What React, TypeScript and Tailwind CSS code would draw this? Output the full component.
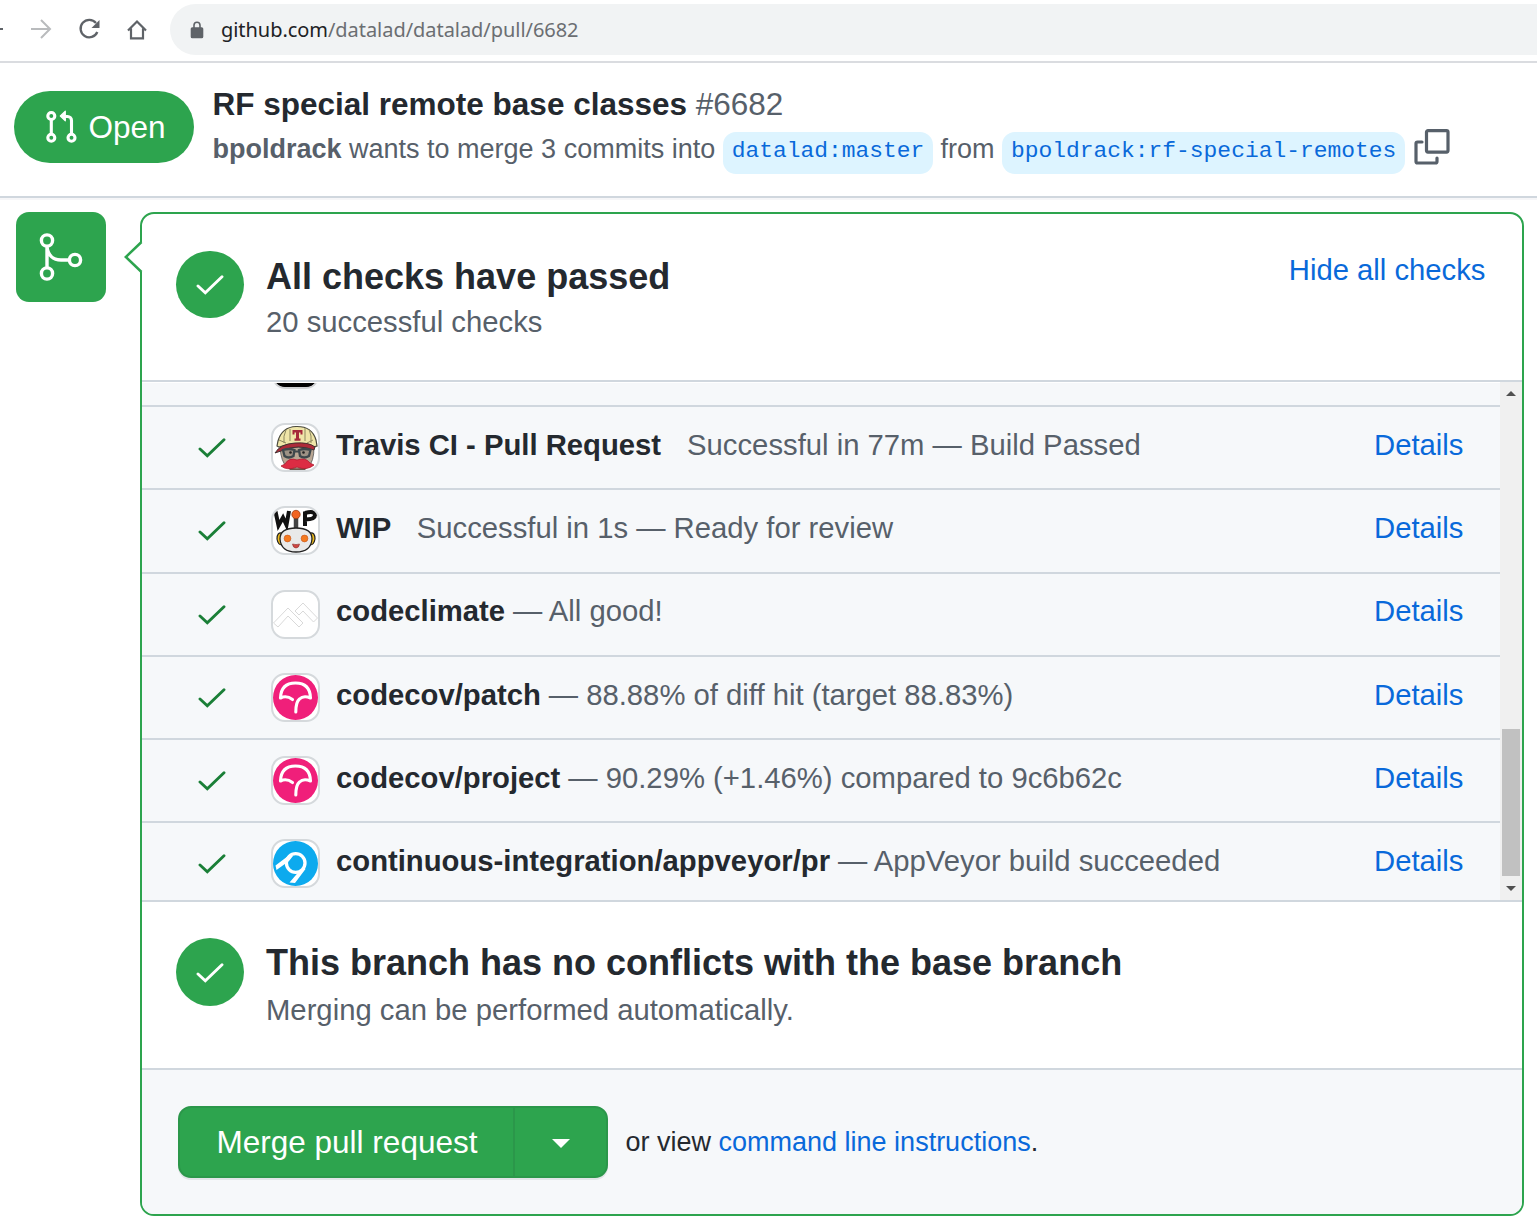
import React from 'react';

type IconProps = { className?: string };

function Check({ className }: IconProps) {
  return (
    <svg viewBox="0 0 28 20" className={className} fill="none" stroke="currentColor" strokeWidth="2.9" strokeLinecap="round" strokeLinejoin="miter">
      <path d="M2 11 L9.3 17.800 L26 1.800" />
    </svg>
  );
}

function PullRequest() {
  return (
    <svg viewBox="0 0 36 36" className="h-9 w-9 shrink-0" fill="none" stroke="white" strokeWidth="3.1">
      <circle cx="8.300" cy="7" r="3.500" />
      <circle cx="8.300" cy="28.700" r="3.500" />
      <circle cx="28.500" cy="28.700" r="3.500" />
      <path d="M8.300 10.500v15M28.500 25.500V11.500a4 4 0 0 0-4-4H21" />
      <path d="M17.300 7l5-4.800v9.600z" fill="white" strokeWidth="1.200" strokeLinejoin="round" />
    </svg>
  );
}

function MergeIcon() {
  return (
    <svg viewBox="0 0 54 54" className="h-[54px] w-[54px]" fill="none" stroke="white" strokeWidth="3.4">
      <circle cx="13" cy="10.500" r="5.600" />
      <circle cx="13" cy="43.500" r="5.600" />
      <circle cx="41" cy="30" r="5.600" />
      <path d="M13 16v21M13 17c1 8 6 13 14 13h8.500" />
    </svg>
  );
}

function CopyIcon() {
  return (
    <svg viewBox="0 0 36 36" className="h-9 w-9" fill="none" stroke="#57606a" strokeWidth="3.200" strokeLinecap="round" strokeLinejoin="round">
      <rect x="12.500" y="1.600" width="21.500" height="21.500" rx="1.500" />
      <path d="M8 13H3.500a1.500 1.500 0 0 0-1.500 1.500v18a1.500 1.500 0 0 0 1.500 1.500h18a1.500 1.500 0 0 0 1.500-1.500V29" />
    </svg>
  );
}

function Travis() {
  return (
    <svg viewBox="0 0 45 45" className="h-full w-full">
      <path d="M7 22h34q0 15-6 20-11 5-21 0-6-5-7-20z" fill="#b9a794" stroke="#555" strokeWidth=".8" />
      <path d="M4 21l1-5Q9 2 23 1.500 39 1 43 15l1 6-4 1Q23 15 6 22z" fill="#efe5a8" stroke="#4b4a3d" strokeWidth="1.200" />
      <path d="M13 5q-3 6-2 13M36 4q3 7 2 14M17 4v12M32 3v13M6 15l7 3M40 15l-6 3" stroke="#8d875e" fill="none" />
      <path d="M19.500 5h10v4.500h-2V7.500h-1.500v6h1.500v2.200h-6v-2.200h1.500v-6h-1.500v2h-2z" fill="#a5283a" />
      <path d="M2 28q5-9 20-10 14-1 20 4l-1 3q-16-6-30 0z" fill="#ad2b39" stroke="#3a2b2d" strokeWidth=".9" />
      <path d="M10 25q6-2 11.500 0l-1 6q-5 3-9 0zM26 25q6-2 11.500 0l-1.500 6q-5 3-9 0z" fill="#9d9285" stroke="#3e484c" strokeWidth="2.300" />
      <path d="M21.500 26.500h5" stroke="#3e484c" strokeWidth="2" />
      <circle cx="17.500" cy="27.500" r="1.300" fill="#222" />
      <circle cx="30.500" cy="27.500" r="1.300" fill="#222" />
      <path d="M13 41q10 5 23 0l-4 4H17z" fill="#6c5548" />
      <path d="M24 35q-8-3-12 4l-4 2q6 5 16 1 10 4 17-2l-4-2q-4-6-13-3z" fill="#dc2c43" stroke="#b01f33" strokeWidth=".8" />
    </svg>
  );
}

function Wip() {
  return (
    <svg viewBox="0 0 45 45" className="h-full w-full">
      <path d="M2.500 3.500l3 14 4.500-8 3.500 7.500 2.500-14M32 18V3.500M32 5q10-2.500 10 2t-10 4.500" fill="none" stroke="#111" strokeWidth="4" />
      <path d="M23 8v14" stroke="#444" strokeWidth="4.500" />
      <circle cx="23" cy="6.500" r="4.200" fill="#f26522" stroke="#8f3711" strokeWidth=".7" />
      <path d="M9 25q-5-1-5 6 1 6 5 6M37 25q5-1 5 6-1 6-5 6" fill="#f0bd1c" stroke="#222" strokeWidth="1.200" />
      <path d="M7 31Q7 20 23 20t16 11Q38 44 23 44T7 31z" fill="#e9e9e9" stroke="#222" strokeWidth="1.300" />
      <circle cx="14.500" cy="30.500" r="3.400" fill="#f47a20" stroke="#c4541c" strokeWidth=".6" />
      <circle cx="31.500" cy="30.500" r="3.400" fill="#f47a20" stroke="#c4541c" strokeWidth=".6" />
      <path d="M19.500 36q3.500 1.200 7 0-.5 4-3.500 4t-3.500-4z" fill="#cf4542" stroke="#8d2d2a" strokeWidth=".6" />
    </svg>
  );
}

function CodeClimate() {
  return (
    <svg viewBox="0 0 45 45" className="h-full w-full" fill="none" stroke="#d9d9d9" strokeWidth="1">
      <path d="M.5 31L15 16l15 15-4 4-11-11L5 35zM22 19l8-8 14.500 15-4 4-10.500-11-4 4z" />
    </svg>
  );
}

function Codecov() {
  return (
    <svg viewBox="0 0 45 45" className="h-full w-full">
      <circle cx="22.500" cy="22.500" r="22.500" fill="#f01f7a" />
      <path d="M7.500 23Q8 8 22.500 8T37.500 23q-7-3-11 1-3.700 3-3.700 13M7.500 23q6-3 12 1.500" fill="none" stroke="white" strokeWidth="3.100" strokeLinecap="round" strokeLinejoin="round" />
    </svg>
  );
}

function AppVeyor() {
  return (
    <svg viewBox="0 0 45 45" className="h-full w-full">
      <circle cx="22.500" cy="22.500" r="22.500" fill="#0daaee" />
      <circle cx="22.700" cy="22" r="9.300" fill="none" stroke="white" strokeWidth="3.300" />
      <path d="M2.500 24.500L17 13.500l3 1.500-4 5L3.500 29zM16.500 41.500L25.500 31l6-4 1 1L22 42z" fill="white" />
    </svg>
  );
}

const checks = [
  { icon: <Travis />, name: 'Travis CI - Pull Request', note: 'Successful in 77m — Build Passed', gap: 'ml-[26px]' },
  { icon: <Wip />, name: 'WIP', note: 'Successful in 1s — Ready for review', gap: 'ml-[25.5px]' },
  { icon: <CodeClimate />, name: 'codeclimate', note: '— All good!', gap: 'ml-2' },
  { icon: <Codecov />, name: 'codecov/patch', note: '— 88.88% of diff hit (target 88.83%)', gap: 'ml-2' },
  { icon: <Codecov />, name: 'codecov/project', note: '— 90.29% (+1.46%) compared to 9c6b62c', gap: 'ml-2' },
  { icon: <AppVeyor />, name: 'continuous-integration/appveyor/pr', note: '— AppVeyor build succeeded', gap: 'ml-2' },
];

function Status({ title, note, badge, lead }: { title: string; note: string; badge: string; lead: string }) {
  return (
    <div className="flex">
      <div className={`mt-0.5 flex w-[68px] shrink-0 items-center justify-center rounded-full bg-[#2da44e] pt-px text-white ${badge}`}>
        <Check className="h-5 w-7" />
      </div>
      <div className="ml-[22px]">
        <h2 className={`text-[36px] font-bold text-[#24292f] ${lead}`}>{title}</h2>
        <p className="text-[29.25px] leading-[40px] text-[#57606a]">{note}</p>
      </div>
    </div>
  );
}

export default function App() {
  return (
    <div className="h-[1227px] w-[1537px] overflow-hidden bg-white font-['Liberation_Sans',Arial,sans-serif] whitespace-nowrap">
      <header className="flex h-[63px] items-start border-b-2 border-[#dadce0] pt-1">
        <div className="flex h-[51px] w-[170px] shrink-0 items-center">
          <svg viewBox="0 0 170 51" className="h-[51px] w-[170px]" fill="none" stroke="#5f6368" strokeWidth="2">
            <path d="M0 25h3" />
            <path d="M31 25h19M41 16l9 9-9 9" stroke="#b9bbbd" />
            <path d="M96 19a8.700 8.700 0 1 0 1.300 9" strokeWidth="2.300" />
            <path d="M99.500 16v8h-8z" fill="#5f6368" stroke="none" />
            <path d="M128 26.500l9-9 9 9M131 24.500V34.300h12V24.500" strokeWidth="2.200" />
          </svg>
        </div>
        <div className="flex h-[51px] flex-1 items-center rounded-l-full bg-[#f1f3f4] pl-[20px]">
          <svg viewBox="0 0 14 18" className="h-[18px] w-[14px]" fill="none" stroke="#5f6368" strokeWidth="1.600">
            <rect x="1.500" y="7" width="11" height="9.500" rx=".8" fill="#5f6368" />
            <path d="M4 7V4.300a3 3 0 0 1 6 0V7" />
          </svg>
          <span className="ml-[17px] font-['Noto_Sans',sans-serif] text-[20px] tracking-[-0.05px] text-[#6b6e72]"><span className="text-[#202124]">github.com</span>/datalad/datalad/pull/6682</span>
        </div>
      </header>

      <section className="flex h-[135px] items-start border-b-2 border-[#d0d7de] shadow-[0_2px_0_#f6f6f8]">
        <div className="mt-7 ml-3.5 flex h-[72px] w-[180px] items-center rounded-full bg-[#2da44e] pl-[29px] text-white">
          <PullRequest />
          <span className="ml-[9.5px] pt-0.5 text-[31.5px]">Open</span>
        </div>
        <div className="mt-[21px] ml-[18.5px]">
          <h1 className="text-[31.5px] leading-[40px] text-[#57606a]"><b className="text-[#24292f]">RF special remote base classes</b> #6682</h1>
          <div className="mt-0.5 flex h-[46px] items-center text-[27px] leading-[46px] text-[#57606a]">
            <span><b>bpoldrack</b> wants to merge 3 commits into</span>
            <code className="mt-2 ml-2 h-[42px] rounded-[13px] bg-[#ddf4ff] px-[8.5px] font-['Liberation_Mono',monospace] text-[22.95px] leading-[38px] text-[#0969da]">datalad:master</code>
            <span className="ml-[7.5px]">from</span>
            <code className="mt-2 ml-2 h-[42px] rounded-[13px] bg-[#ddf4ff] px-[8.5px] font-['Liberation_Mono',monospace] text-[22.95px] leading-[38px] text-[#0969da]">bpoldrack:rf-special-remotes</code>
            <span className="mb-[5px] ml-[9px]"><CopyIcon /></span>
          </div>
        </div>
      </section>

      <main className="flex pt-[14px] pl-4">
        <div className="flex h-[90px] w-[90px] shrink-0 items-center justify-center rounded-[13px] bg-[#2da44e]"><MergeIcon /></div>
        <div className="relative ml-[34px] h-[1004px] w-[1384px] rounded-[14px] border-2 border-[#2da44e]">
          <svg viewBox="0 0 19 32" className="absolute top-[27px] -left-[18px] h-8 w-[19px]">
            <path d="M18 1.500L2 16l16 14.500" fill="white" />
            <path d="M18 1.500v29" stroke="white" strokeWidth="3" />
            <path d="M17.500 1L1.800 16l15.700 15" fill="none" stroke="#2da44e" strokeWidth="2.500" />
          </svg>
          <div className="flex h-[168px] justify-between border-b-2 border-[#d0d7de] pt-[35px] pr-[36.5px] pl-[34px]">
            <Status title="All checks have passed" note="20 successful checks" badge="h-[67px]" lead="leading-[53px] pt-px -mb-px" />
            <a className="text-[29.25px] leading-[42px] text-[#0969da]">Hide all checks</a>
          </div>
          <div className="flex h-[520px] overflow-hidden border-b-2 border-[#d0d7de]">
            <div className="h-full flex-1 border-t border-white bg-[#f6f8fa]">
              <div className="h-[22px] pl-[130px]">
                <svg viewBox="0 0 48 7" className="h-[7px] w-12">
                  <path d="M3 0q4 5 10 5h21q6 0 10-5" fill="black" stroke="#d0d2d4" strokeWidth="2" />
                  <path d="M5 0q3 3.500 9 3.500h20q6 0 8-3.500" fill="black" />
                </svg>
              </div>
              {checks.map((c) => (
                <div key={c.name} className="flex h-[83.25px] items-center border-t-2 border-[#d0d7de] pr-[36.5px] pl-14 text-[29.25px] text-[#57606a]">
                  <Check className="mt-px h-5 w-7 text-[#1a7f37]" />
                  <div className="ml-[45px] h-[49px] w-[49px] shrink-0 overflow-hidden rounded-[14px] border-2 border-[#d5d9dc] bg-white">{c.icon}</div>
                  <div className="mb-[3.5px] ml-4 flex flex-1">
                    <b className="text-[#24292f]">{c.name}</b>
                    <span className={c.gap}>{c.note}</span>
                  </div>
                  <a className="mb-[3.5px] text-[#0969da]">Details</a>
                </div>
              ))}
            </div>
            <div className="flex w-[22px] flex-col items-center bg-[#f0f0f0]">
              <svg viewBox="0 0 10 5" className="mt-[9px] h-[5px] w-2.5"><path d="M0 5l5-5 5 5z" fill="#505050" /></svg>
              <div className="mt-[333px] mr-1 ml-0.5 h-[147px] w-[18px] self-start bg-[#c1c1c1]" />
              <svg viewBox="0 0 10 5" className="mt-[10px] h-[5px] w-2.5"><path d="M0 0h10L5 5z" fill="#505050" /></svg>
            </div>
          </div>
          <div className="h-[168px] border-b-2 border-[#d0d7de] pt-[34px] pl-[34px]">
            <Status title="This branch has no conflicts with the base branch" note="Merging can be performed automatically." badge="h-[68px]" lead="leading-[54px]" />
          </div>
          <div className="flex h-[144px] items-center rounded-b-xl bg-[#f6f8fa] pl-9">
            <div className="flex h-[72px] w-[430px] overflow-hidden rounded-[13px] border-2 border-[#2b974a] bg-[#2da44e] text-white shadow-[0_2px_0_#e2e5e8]">
              <button className="w-[335px] border-r-2 border-[#2b974a] pt-0.5 pl-px text-[31.5px]">Merge pull request</button>
              <button className="flex flex-1 items-center justify-center"><svg viewBox="0 0 18 9" className="mt-0.5 h-[9px] w-[18px]"><path d="M0 0h18L9 9z" fill="white" /></svg></button>
            </div>
            <p className="ml-[17.5px] text-[27px] text-[#24292f]">or view <a className="text-[#0969da]">command line instructions</a>.</p>
          </div>
        </div>
      </main>
    </div>
  );
}
